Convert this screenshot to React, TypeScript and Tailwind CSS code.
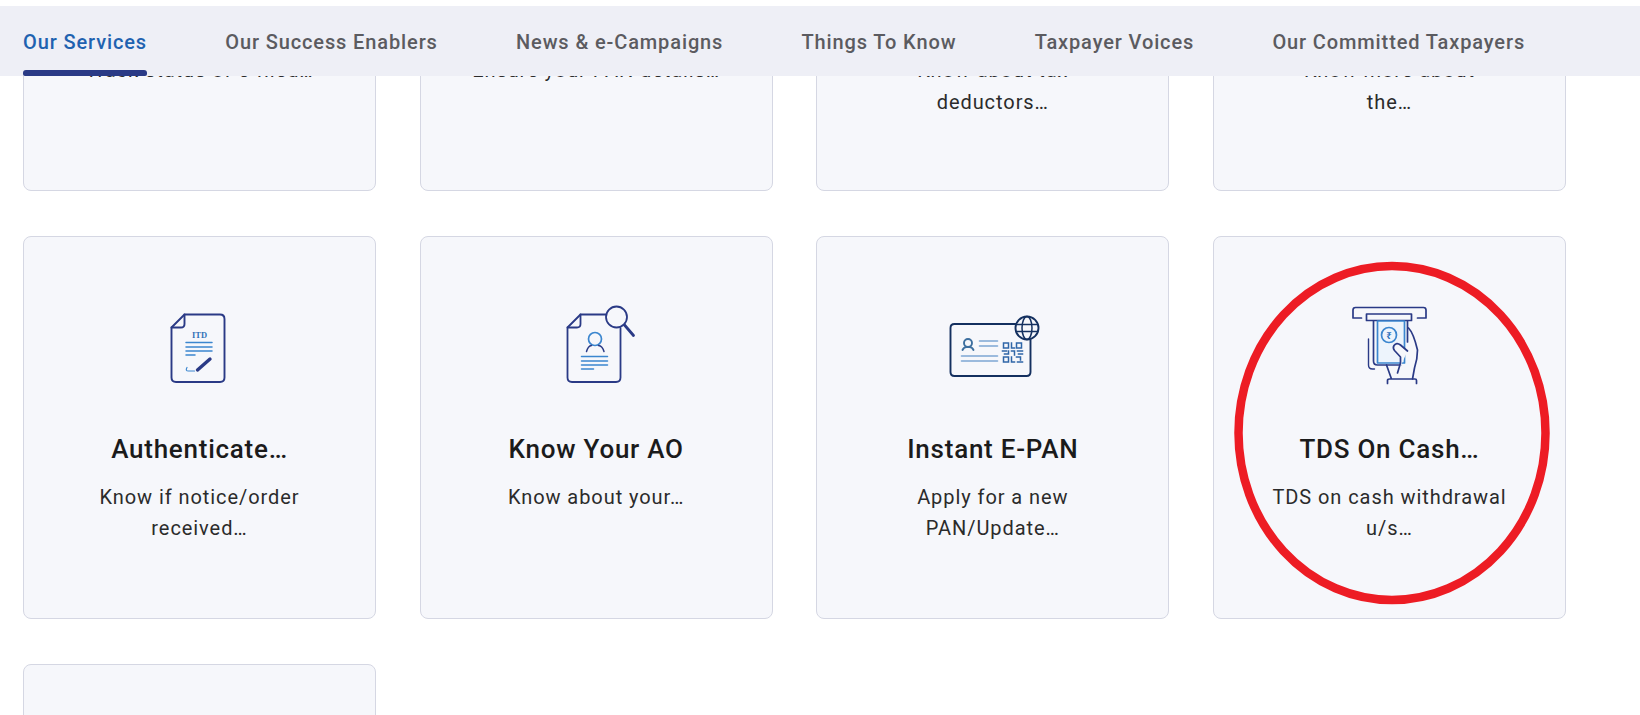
const NAVY = "#2a3a86";
const BLUE = "#3b86cf";

function Icon({ view, children }: { view: string; children: React.ReactNode }) {
  return (
    <svg width="120" height="110" viewBox={view} fill="none" strokeLinecap="round" strokeLinejoin="round" className="shrink-0">
      {children}
    </svg>
  );
}

function ItdIcon() {
  return (
    <Icon view="-0.5 0 120 110">
      <path d="M44 24.5H79.5Q84 24.5 84 29V87.5Q84 92 79.5 92H35.5Q31 92 31 87.5V37.5Z" stroke={NAVY} strokeWidth="1.9" />
      <path d="M44 24.5V34Q44 37.5 40.5 37.5H31" stroke={NAVY} strokeWidth="1.9" />
      <text x="59" y="47.5" textAnchor="middle" fontFamily="'Liberation Serif', serif" fontWeight="700" fontSize="8.5" fill="#3272b8">ITD</text>
      <path d="M45.5 52.5H71.5M45.5 57H71.5M45.5 61H71.5M45.5 65H54.5" stroke={BLUE} strokeWidth="1.5" />
      <path d="M57 80L69.5 69" stroke={NAVY} strokeWidth="3.4" />
      <path d="M46.5 77.5Q44.5 81 48 81H54" stroke={BLUE} strokeWidth="1.2" />
    </Icon>
  );
}

function AoIcon() {
  return (
    <Icon view="-3.5 0 120 110">
      <path d="M66 24.5H41L28 37.5V87.5Q28 92 32.5 92H76.5Q81 92 81 87.5V38" stroke={NAVY} strokeWidth="1.8" />
      <path d="M41 24.5V34Q41 37.5 37.5 37.5H28" stroke={NAVY} strokeWidth="1.8" />
      <circle cx="77" cy="27" r="10.5" stroke={NAVY} strokeWidth="1.8" />
      <path d="M85 35L94 45.5" stroke={NAVY} strokeWidth="2.8" />
      <circle cx="55.5" cy="49" r="6.5" stroke={BLUE} strokeWidth="1.7" />
      <path d="M47 61.5Q48.5 56 52 55.5M64.5 61.5Q63 56 59 55.5" stroke={NAVY} strokeWidth="1.5" />
      <path d="M42 66.5H68M42 71H68M42 75H68M42 79H54" stroke={BLUE} strokeWidth="1.5" />
    </Icon>
  );
}

function EpanIcon() {
  const dark = "#14305f";
  const light = "#7ea7d4";
  return (
    <Icon view="2.5 -10 120 110">
      <path d="M85 24H24Q20 24 20 28V72Q20 76 24 76H96Q100 76 100 72V40" stroke={dark} strokeWidth="1.9" />
      <circle cx="96.5" cy="28" r="11.5" fill="#f6f7fb" stroke={dark} strokeWidth="1.9" />
      <ellipse cx="96.5" cy="28" rx="5" ry="11.5" stroke={dark} strokeWidth="1.5" />
      <path d="M85.5 24.5H107.5M85.5 31.5H107.5" stroke={dark} strokeWidth="1.4" />
      <circle cx="37.5" cy="43" r="4" stroke="#3d6f9f" strokeWidth="1.9" />
      <path d="M32 50Q33.5 47 36 47H39Q41.5 47 43 50" stroke="#3d6f9f" strokeWidth="1.9" />
      <path d="M49 41H67M49 46H67M31 56H67M31 61H67" stroke={light} strokeWidth="1.6" />
      <g stroke="#2f66a8" strokeWidth="1.5" strokeLinecap="square" strokeLinejoin="miter">
        <rect x="73" y="43" width="5" height="5" />
        <rect x="86" y="43" width="5" height="5" />
        <rect x="73" y="57" width="5" height="5" />
        <path d="M81 43V48H84M72 51H76M78 51V54H74M81 51H84V55M87 51H92M88 54H92M81 57V62H84M86 57H90V60M87 62H92" />
      </g>
    </Icon>
  );
}

function CashIcon() {
  return (
    <Icon view="-0.5 -5 120 110">
      <path d="M23.5 23V15Q23.5 12.5 26 12.5H94Q96.5 12.5 96.5 15V23H88M23.5 23H32" stroke={NAVY} strokeWidth="1.7" />
      <rect x="37" y="19" width="45" height="6.5" stroke={NAVY} strokeWidth="1.7" />
      <rect x="48" y="26" width="27" height="42" fill="#edf4fc" stroke={BLUE} strokeWidth="1.7" />
      <path d="M44 26V66Q44 70 48 70H71" stroke={NAVY} strokeWidth="1.7" />
      <path d="M78 26V47" stroke={NAVY} strokeWidth="1.7" />
      <path d="M39 44V70Q39 74 43 74H45" stroke={NAVY} strokeWidth="1.4" />
      <circle cx="59.5" cy="40" r="7.5" stroke={BLUE} strokeWidth="1.7" />
      <text x="59.5" y="43.5" textAnchor="middle" fontFamily="'Noto Sans', 'DejaVu Sans', sans-serif" fontSize="9.5" fontWeight="700" fill="#2f72bd">₹</text>
      <path d="M79 33Q84 38 88 55Q88 64 85 73L83 84" stroke={NAVY} strokeWidth="1.7" />
      <path d="M78 56L71 50Q67 47 64.5 50.5Q63 53 65 55.5L71 62V68L68 78" stroke={NAVY} strokeWidth="1.7" fill="#f6f7fb" />
      <path d="M57 70L62 84H83M58 88.5V85.5Q58 84 60 84H85.5Q87 84 87 85.5V88.5" stroke={NAVY} strokeWidth="1.7" />
    </Icon>
  );
}

function Card({ icon, title, lines }: { icon?: React.ReactNode; title?: string; lines?: string[] }) {
  return (
    <div className="h-[383px] rounded-lg border border-[#d5d7e3] bg-[#f6f7fb] flex flex-col items-center pt-[53px]">
      <div className="h-[110px] w-[120px]">{icon}</div>
      {title && (
        <div className="mt-[33.5px] h-[30px] text-[26px] leading-[30px] font-medium tracking-[0.75px] text-[#1b1b1b] whitespace-nowrap">
          {title}
        </div>
      )}
      {!title && <div className="mt-[35px] h-[30px]" />}
      {lines && (
        <div className="mt-[18px] text-center text-[20px] leading-[31.5px] tracking-[0.93px] text-[#2b2b2b]">
          {lines.map((l) => (
            <div key={l}>{l}</div>
          ))}
        </div>
      )}
    </div>
  );
}

const tabs = ["Our Services", "Our Success Enablers", "News & e-Campaigns", "Things To Know", "Taxpayer Voices", "Our Committed Taxpayers"];

export default function App() {
  return (
    <div className="relative h-[715px] overflow-hidden bg-white font-['Roboto',sans-serif]">
      <div className="mt-[-192px] grid grid-cols-[353px_353px_353px_353px] gap-x-[43.67px] gap-y-[45px] pl-[23px]">
        <Card lines={["Track status of e-filed…"]} />
        <Card lines={["Ensure your PAN details…"]} />
        <Card lines={["Know about tax", "deductors…"]} />
        <Card lines={["Know more about", "the…"]} />
        <Card icon={<ItdIcon />} title="Authenticate…" lines={["Know if notice/order", "received…"]} />
        <Card icon={<AoIcon />} title="Know Your AO" lines={["Know about your…"]} />
        <Card icon={<EpanIcon />} title="Instant E-PAN" lines={["Apply for a new", "PAN/Update…"]} />
        <Card icon={<CashIcon />} title="TDS On Cash…" lines={["TDS on cash withdrawal", "u/s…"]} />
        <Card />
      </div>

      <div className="absolute inset-x-0 top-0 h-[76px] border-t-[6px] border-white bg-[#eeeff6] pl-[23px] flex gap-[78.2px]">
        {tabs.map((t, i) => (
          <div
            key={t}
            className={
              i === 0
                ? "relative pt-[22px] text-[20px] leading-[28px] font-medium tracking-[0.88px] whitespace-nowrap text-[#1f62b0]"
                : "relative pt-[22px] text-[20px] leading-[28px] font-medium tracking-[0.88px] whitespace-nowrap text-[#5b5b60]"
            }
          >
            {t}
            {i === 0 && <div className="absolute inset-x-0 bottom-0 h-[6px] rounded-t-[3px] rounded-b-[2px] bg-[#2a3a86]" />}
          </div>
        ))}
      </div>

      <svg className="absolute left-[1228px] top-[256px] pointer-events-none" width="328" height="354" viewBox="0 0 328 354" fill="none">
        <ellipse cx="164" cy="177" rx="153.5" ry="167" stroke="#ed1c24" strokeWidth="8.5" />
      </svg>
    </div>
  );
}
